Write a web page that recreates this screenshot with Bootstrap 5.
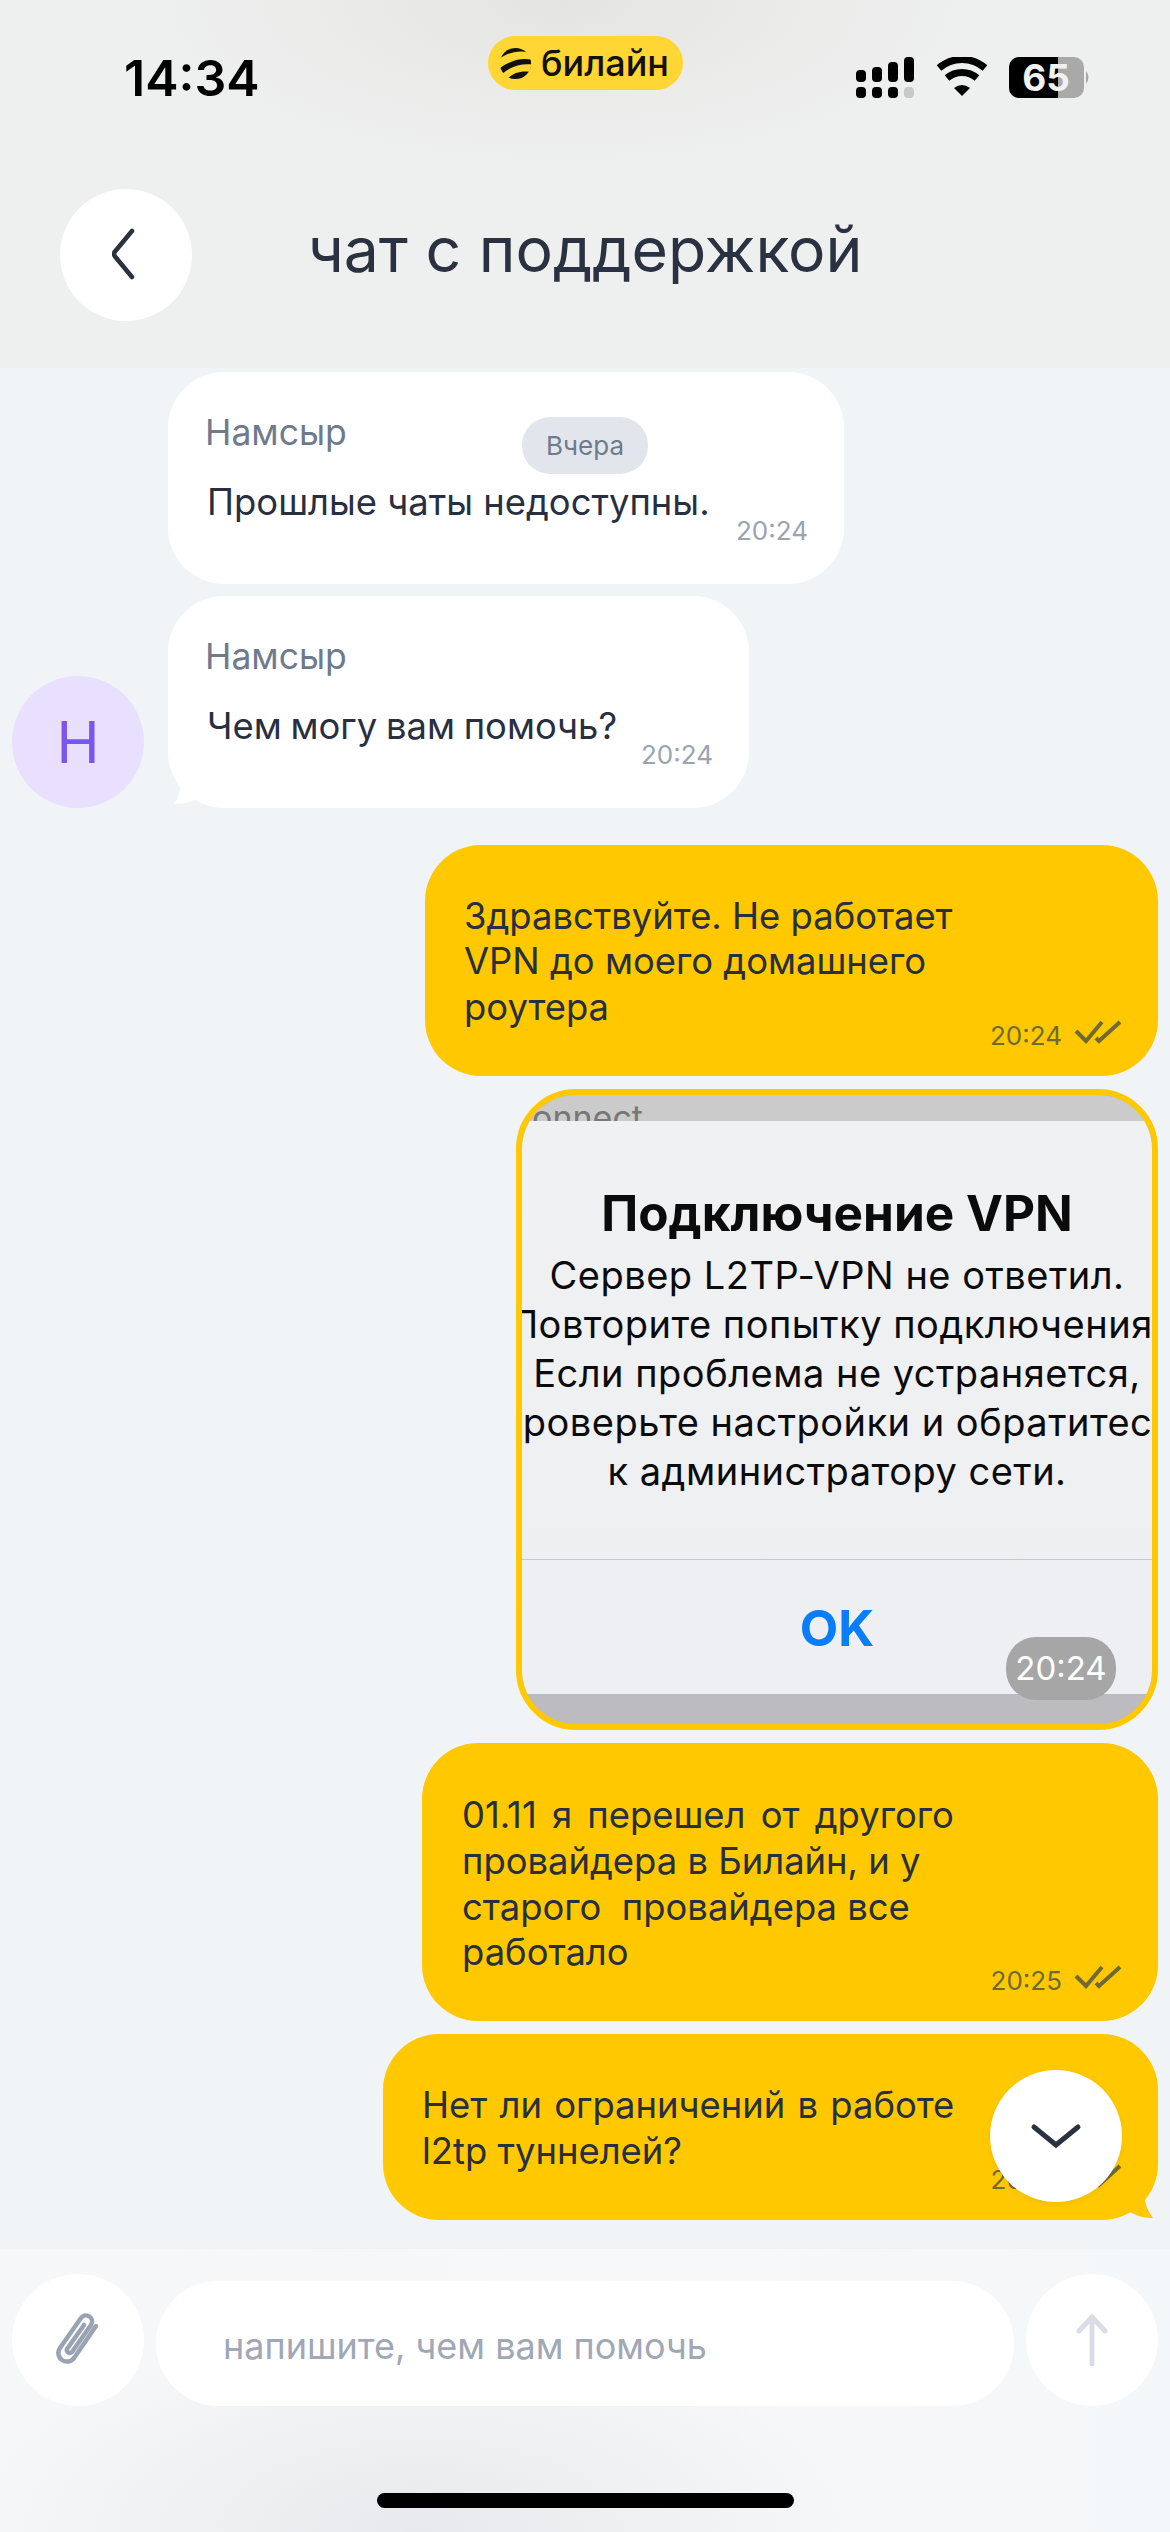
<!DOCTYPE html>
<html lang="ru">
<head>
<meta charset="utf-8">
<title>чат с поддержкой</title>
<link href="https://cdn.jsdelivr.net/npm/bootstrap@5.3.0/dist/css/bootstrap.min.css" rel="stylesheet">
<style>
html,body{margin:0;background:#f0f4f7}
.phone{width:1170px;height:2532px;position:relative;overflow:hidden;font-family:Inter,"Noto Sans",sans-serif;color:#282f3f}
.top-area{height:368px;background:radial-gradient(ellipse 420px 170px at 560px 0,#e4e4e2 0,#ebebea 55%,rgba(238,238,238,0) 100%),#eeefef}
.status-row{height:189px;padding:0 79px 0 124px}
.clock{font-family:Inter,sans-serif;font-weight:600;font-size:50px;line-height:50px;margin-top:53px;color:#000;width:364px;flex:none}
.brand-pill{width:195px;height:54px;margin-top:36px;background:#ffd633;border-radius:27px;color:#111;font-size:36px;font-weight:500;line-height:54px;gap:9px;padding-left:11px;flex:none}
.status-icons{flex:1;height:60px;margin-top:57px}
.round-btn{width:132px;height:132px;border-radius:50%;background:#fff;flex:none}
.head-row{padding-left:60px}
.head-title{font-size:62.500px;line-height:120px;height:132px;text-align:center;flex:1;padding-right:192px;margin:0;font-weight:400;color:#2a3242;white-space:nowrap}
.chat-area{height:1881px;padding-top:4px;background:#f0f4f7}
.chat-area>*{flex:none}
.bub{position:relative;border-radius:56px;font-size:36.400px;line-height:45.800px;white-space:nowrap}
.bub-in{background:#fff;padding:39px 36px 36px 39px;margin-left:168px;color:#282f3f}
.bub-out{background:#ffc800;align-self:flex-end;margin-right:12px;color:#282f3f;padding-right:36px;padding-bottom:23px}
.who{font-size:35.500px;line-height:44px;margin-bottom:25px;margin-left:-2px;color:#6f7a8c}
.meta{font-size:26px;line-height:34px;margin-top:-12px;gap:12px;color:#9aa3b2}
.bub-out .meta{color:#6f6a33}
.wide-words{word-spacing:5px}
.wider-words{word-spacing:2px}
.tight-words{word-spacing:-1.500px}
.day-pill{position:absolute;left:354px;top:45px;width:126px;height:57px;border-radius:28px;background:#e2e6ec;color:#6f7a8c;font-size:26px;line-height:57px;text-align:center}
.tail{position:absolute}
.ava{width:132px;height:132px;border-radius:50%;background:#e8e0fe;color:#7a57ea;font-size:58px;line-height:132px;text-align:center;margin-left:12px;flex:none}
.shot{width:642px;height:641px;border:6px solid #ffc800;border-radius:60px;align-self:flex-end;margin:13px 12px 13px 0;overflow:hidden;position:relative;background:#bbbbc0}
.shot-bleed{height:26px;padding-left:10px;font-size:34px;line-height:26px;color:#777;overflow:hidden;background:#cbcbcb}
.shot-bleed span{display:block;margin-top:10px}
.alert-box{height:573px;background:linear-gradient(180deg,#f0f1f2,#eeeff2);padding-top:62px;font-family:Inter,"Noto Sans",sans-serif;color:#0b0b0b}
.alert-title{font-size:49.500px;font-weight:700;line-height:60px;white-space:nowrap;margin-bottom:8px}
.alert-line{font-size:38px;line-height:49px;white-space:nowrap;letter-spacing:.5px}
.alert-rule{height:1px;background:#c8c8cc;width:100%;margin-top:63px;flex:none}
.alert-ok{font-size:50px;font-weight:700;color:#0a7dfa;line-height:60px;margin-top:38px}
.shot-time{position:absolute;right:36px;bottom:24px;width:110px;height:63px;border-radius:30px;background:#a6a6a6;color:#fff;font-size:33px;line-height:63px;text-align:center}
.jump{position:absolute;left:990px;top:2070px;box-shadow:0 2px 6px rgba(0,0,0,.05)}
.bottom-area{height:283px;padding-top:25px;background:radial-gradient(ellipse 460px 210px at 420px 283px,#e8e9ec 0,#f1f2f4 60%,rgba(245,247,250,0) 100%),linear-gradient(90deg,#f5f7f9,#f7f8fa 55%,#f4f7f9)}
.input-row{padding:0 12px;gap:12px}
.field{flex:1;height:125px;border-radius:62px;background:#fff;padding-left:67px;font-size:36px;line-height:130px;color:#a0a7b5}
.home-bar{width:417px;height:15px;border-radius:8px;background:#000;margin:87px auto 0}
</style>
</head>
<body>
<div class="phone">
  <header class="top-area">
    <div class="status-row d-flex align-items-start">
      <div class="clock">14:34</div>
      <div class="brand-pill d-flex align-items-center">
        <svg width="33" height="33" viewBox="0 0 36 36"><circle cx="18" cy="18" r="17" fill="#111"/><path d="M0 13C9 6 22 3 32 6l4 8C24 11 12 15 1 23zM4 29c9-8 20-11 32-10l-3 8c-9-1-17 1-23 7z" fill="#ffd633"/></svg>
        <span>билайн</span>
      </div>
      <div class="status-icons d-flex justify-content-end">
        <svg width="235" height="45" viewBox="856 57 235 45">
          <g fill="#000">
            <rect x="856" y="70" width="10" height="12" rx="4"/><rect x="872" y="67" width="10" height="15" rx="4"/><rect x="888" y="62" width="10" height="20" rx="4"/><rect x="904" y="57" width="10" height="25" rx="4"/>
            <rect x="856" y="87" width="10" height="11" rx="4"/><rect x="872" y="87" width="10" height="11" rx="4"/><rect x="888" y="87" width="10" height="11" rx="4"/>
          </g>
          <rect x="904" y="87" width="10" height="11" rx="4" fill="#c8c8c8"/>
          <path d="M939 68a35 35 0 0 1 46 0" fill="none" stroke="#000" stroke-width="7"/>
          <path d="M947 78a23 23 0 0 1 30 0" fill="none" stroke="#000" stroke-width="7"/>
          <path d="M954 88q8-6 16 0l-8 8z" fill="#000"/>
          <rect x="1009" y="57" width="75" height="41" rx="10" fill="#a9a9a9"/>
          <path d="M1058 57h-39a10 10 0 0 0-10 10v21a10 10 0 0 0 10 10h39z" fill="#000"/>
          <path d="M1086 71q5 6 0 13z" fill="#a9a9a9"/>
          <text x="1046" y="91" text-anchor="middle" font-family="Inter,sans-serif" font-weight="700" font-size="37" fill="#f2f2f2">65</text>
        </svg>
      </div>
    </div>
    <div class="head-row d-flex align-items-center">
      <button class="round-btn border-0 p-0 d-flex align-items-center justify-content-center" aria-label="Назад">
        <svg width="28" height="54" viewBox="0 0 28 54"><path d="M23 4 L6 24.500 Q4 27 6 29.500 L23 50" fill="none" stroke="#2a3242" stroke-width="4.500" stroke-linecap="round" transform="translate(-3,-1)"/></svg>
      </button>
      <h1 class="head-title">чат с поддержкой</h1>
    </div>
  </header>

  <main class="chat-area d-flex flex-column">
    <div class="bub bub-in align-self-start" style="width:676px">
      <div class="who">Намсыр</div>
      <div>Прошлые чаты недоступны.</div>
      <div class="meta d-flex justify-content-end">20:24</div>
      <div class="day-pill">Вчера</div>
    </div>
    <div class="d-flex align-items-end mt-3" style="margin-top:12px!important;margin-bottom:37px">
      <div class="ava">Н</div>
      <div class="bub bub-in" style="margin-left:24px;width:581px">
        <div class="who">Намсыр</div>
        <div class="tight-words">Чем могу вам помочь?</div>
        <div class="meta d-flex justify-content-end">20:24</div>
        <svg class="tail" style="left:4px;bottom:0" width="36" height="26" viewBox="0 0 36 26"><path d="M8 0 Q9 14 2 22 Q16 23 30 14z" fill="#fff"/></svg>
      </div>
    </div>
    <div class="bub bub-out" style="width:733px;padding-top:49px;padding-left:39px">
      <div>Здравствуйте. Не работает<br>VPN до моего домашнего<br>роутера</div>
      <div class="meta d-flex justify-content-end">20:24
        <svg width="48" height="26" viewBox="0 0 48 26" class="mt-0"><path d="M2 12l10 10L28 3M22 19l3 3L46 3" fill="none" stroke="#6f6a33" stroke-width="4"/></svg>
      </div>
    </div>
    <div class="shot">
      <div class="shot-bleed"><span>onnect</span></div>
      <div class="alert-box d-flex flex-column align-items-center">
        <div class="alert-title">Подключение VPN</div>
        <div class="alert-line">Сервер L2TP-VPN не ответил.</div>
        <div class="alert-line">Повторите попытку подключения.</div>
        <div class="alert-line">Если проблема не устраняется,</div>
        <div class="alert-line">проверьте настройки и обратитесь</div>
        <div class="alert-line">к администратору сети.</div>
        <div class="alert-rule"></div>
        <div class="alert-ok">OK</div>
      </div>
      <div class="shot-time">20:24</div>
    </div>
    <div class="bub bub-out" style="width:736px;padding-top:50px;padding-left:40px;margin-bottom:13px">
      <div><span class="wide-words">01.11 я перешел от другого</span><br>провайдера в Билайн, и у<br>старого&nbsp; провайдера все<br>работало</div>
      <div class="meta d-flex justify-content-end">20:25
        <svg width="48" height="26" viewBox="0 0 48 26"><path d="M2 12l10 10L28 3M22 19l3 3L46 3" fill="none" stroke="#6f6a33" stroke-width="4"/></svg>
      </div>
    </div>
    <div class="bub bub-out" style="width:775px;padding-top:49px;padding-left:39px">
      <div><span class="wider-words">Нет ли ограничений в работе</span><br>l2tp туннелей?</div>
      <div class="meta d-flex justify-content-end">20:25
        <svg width="48" height="26" viewBox="0 0 48 26"><path d="M2 12l10 10L28 3M22 19l3 3L46 3" fill="none" stroke="#6f6a33" stroke-width="4"/></svg>
      </div>
      <svg class="tail" style="right:2px;bottom:0" width="36" height="26" viewBox="0 0 36 26"><path d="M24 0 Q25 14 33 24 Q16 24 4 14z" fill="#ffc800"/></svg>
    </div>
  </main>

  <button class="round-btn jump border-0 p-0 d-flex align-items-center justify-content-center" aria-label="Вниз">
    <svg width="52" height="26" viewBox="0 0 52 26"><path d="M4 4l22 18L48 4" fill="none" stroke="#2a3242" stroke-width="5" stroke-linecap="round"/></svg>
  </button>

  <footer class="bottom-area">
    <div class="input-row d-flex align-items-end">
      <div class="round-btn d-flex align-items-center justify-content-center">
        <svg width="52" height="56" viewBox="0 0 52 56"><path d="M44 14 22 46a8.500 8.500 0 0 1-14-10L29 6a6 6 0 0 1 10 7L20 40a3 3 0 0 1-5-3l17-24" fill="none" stroke="#9aa3b2" stroke-width="4.500" stroke-linecap="round" stroke-linejoin="round"/></svg>
      </div>
      <div class="field">напишите, чем вам помочь</div>
      <div class="round-btn d-flex align-items-center justify-content-center">
        <svg width="32" height="52" viewBox="0 0 32 52"><path d="M16 50V3M3 17 16 3l13 14" fill="none" stroke="#d9dde5" stroke-width="5" stroke-linecap="round" stroke-linejoin="round"/></svg>
      </div>
    </div>
    <div class="home-bar"></div>
  </footer>
</div>
<script src="https://cdn.jsdelivr.net/npm/bootstrap@5.3.0/dist/js/bootstrap.bundle.min.js"></script>
</body>
</html>
